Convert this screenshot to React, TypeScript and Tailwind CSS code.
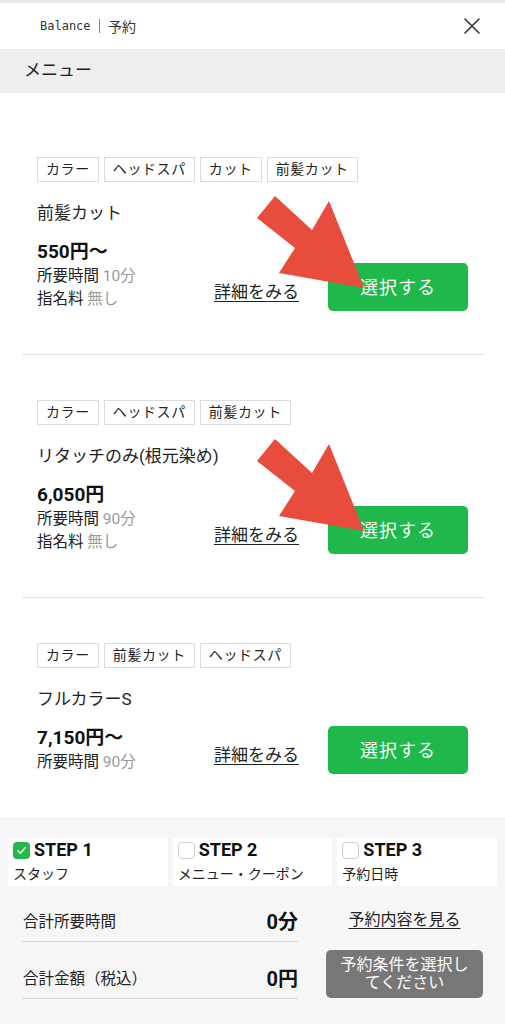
import React from "react";

const FONT = "font-['Roboto','Noto_Sans_CJK_JP',sans-serif]";

function Arrow() {
  return (
    <svg
      className="absolute left-[-80px] top-[-75px] z-10 pointer-events-none"
      width="125"
      height="110"
      viewBox="0 0 125 110"
    >
      <polygon
        points="27,8 64,42 81,13 116,100 31,85 47,60 9,30"
        fill="#e74c3c"
      />
    </svg>
  );
}

type Item = {
  tags: string[];
  title: string;
  price: string;
  time: string;
  fee?: string;
  arrow?: boolean;
  last?: boolean;
};

const items: Item[] = [
  { tags: ["カラー", "ヘッドスパ", "カット", "前髪カット"], title: "前髪カット", price: "550円〜", time: "10分", fee: "無し", arrow: true },
  { tags: ["カラー", "ヘッドスパ", "前髪カット"], title: "リタッチのみ(根元染め)", price: "6,050円", time: "90分", fee: "無し", arrow: true },
  { tags: ["カラー", "前髪カット", "ヘッドスパ"], title: "フルカラーS", price: "7,150円〜", time: "90分", last: true },
];

function Card({ item }: { item: Item }) {
  return (
    <div className={`pt-[45px] pb-[43px] px-[15px] ${item.last ? "" : "border-b border-[#e0e0e0]"}`}>
      <div className="flex gap-[5px]">
        {item.tags.map((t) => (
          <span
            key={t}
            className="h-[25px] px-[8px] border border-[#dcdcdc] text-[14px] leading-[23px] text-[#222] tracking-[0.6px]"
          >
            {t}
          </span>
        ))}
      </div>
      <div className="mt-[19px] text-[17px] leading-[24px] text-[#222]">{item.title}</div>
      <div className="mt-[14px] flex items-end justify-between">
        <div className="flex flex-col">
          <div className="text-[19px] leading-[26px] font-bold text-[#111]">{item.price}</div>
          <div className="text-[15.5px] leading-[23px] text-[#222]">
            所要時間 <span className="text-[#9a9a9a]">{item.time}</span>
          </div>
          {item.fee && (
            <div className="text-[15.5px] leading-[23px] text-[#222]">
              指名料 <span className="text-[#9a9a9a]">{item.fee}</span>
            </div>
          )}
        </div>
        <div className="flex items-end gap-[29px]">
          <span className="mb-[8px] text-[17px] leading-[22px] text-[#222] underline underline-offset-[3px]">
            詳細をみる
          </span>
          <div className="relative">
            <div className="w-[140px] h-[48px] rounded-[5px] bg-[#1fb84a] flex items-center justify-center text-white text-[18px] tracking-[1px]">
              選択する
            </div>
            {item.arrow && <Arrow />}
          </div>
        </div>
      </div>
    </div>
  );
}

function Check({ on }: { on?: boolean }) {
  if (on)
    return (
      <span className="w-[17px] h-[17px] rounded-[4px] bg-[#22b94c] flex items-center justify-center">
        <svg width="11" height="11" viewBox="0 0 12 12" fill="none">
          <path d="M2 6.2 L4.8 9 L10 3" stroke="white" strokeWidth="1.4" strokeLinecap="round" strokeLinejoin="round" />
        </svg>
      </span>
    );
  return <span className="w-[17px] h-[17px] rounded-[4px] bg-white border border-[#cfcfcf]" />;
}

function Step({ n, label, on }: { n: number; label: string; on?: boolean }) {
  return (
    <div className="flex-1 h-[48px] bg-white pl-[5px] flex flex-col">
      <div className="flex items-center gap-[4px] h-[24px]">
        <Check on={on} />
        <span className="text-[18px] font-bold text-[#111] leading-[24px]">STEP {n}</span>
      </div>
      <div className="text-[14px] leading-[24px] text-[#222]">{label}</div>
    </div>
  );
}

export default function App() {
  return (
    <div className={`w-[505px] h-[1024px] overflow-hidden bg-white flex flex-col ${FONT}`}>
      <div className="h-[3px] bg-[#e8e8e8]" />
      <header className="h-[46px] flex items-center justify-between pl-[40px] pr-[24px]">
        <div className="flex items-center text-[#333] font-['DejaVu_Sans_Mono','Noto_Sans_CJK_JP',monospace] text-[12px]">
          <span>Balance</span>
          <span className="mx-[8px] w-[1.5px] h-[14px] bg-[#888]" />
          <span className="text-[14px] font-['Noto_Sans_CJK_JP',sans-serif]">予約</span>
        </div>
        <svg width="18" height="18" viewBox="0 0 18 18" fill="none">
          <path d="M2 2 L16 16 M16 2 L2 16" stroke="#333" strokeWidth="1.6" strokeLinecap="round" />
        </svg>
      </header>
      <div className="h-[44px] bg-[#eeeeee] flex items-center pl-[24px] text-[17px] text-[#222]">メニュー</div>
      <div className="px-[22px] pt-[19px]">
        {items.map((it, i) => (
          <Card key={i} item={it} />
        ))}
      </div>
      <div className="flex-1 bg-[#f6f6f6] pt-[21px]">
        <div className="flex gap-[5px] px-[8px]">
          <Step n={1} label="スタッフ" on />
          <Step n={2} label="メニュー・クーポン" />
          <Step n={3} label="予約日時" />
        </div>
        <div className="flex px-[22px] gap-[28px] mt-[16px]">
          <div className="w-[276px] flex flex-col">
            <div className="h-[40px] flex items-end justify-between pb-[8px] border-b border-[#d9d9d9] pl-[1px]">
              <span className="text-[15.5px] leading-[22px] text-[#222]">合計所要時間</span>
              <span className="text-[20px] leading-[22px] font-bold text-[#111]">0分</span>
            </div>
            <div className="h-[57px] flex items-end justify-between pb-[8px] border-b border-[#d9d9d9] pl-[1px]">
              <span className="text-[15.5px] leading-[22px] text-[#222]">合計金額（税込）</span>
              <span className="text-[20px] leading-[22px] font-bold text-[#111]">0円</span>
            </div>
          </div>
          <div className="flex-1 flex flex-col items-center pt-[7px]">
            <span className="text-[16px] leading-[22px] text-[#222] underline underline-offset-[3px]">予約内容を見る</span>
            <div className="mt-[19px] w-full h-[48px] rounded-[5px] bg-[#777777] flex flex-col items-center justify-center text-white text-[16px] leading-[18px] text-center">
              <span>予約条件を選択し</span>
              <span>てください</span>
            </div>
          </div>
        </div>
      </div>
    </div>
  );
}
